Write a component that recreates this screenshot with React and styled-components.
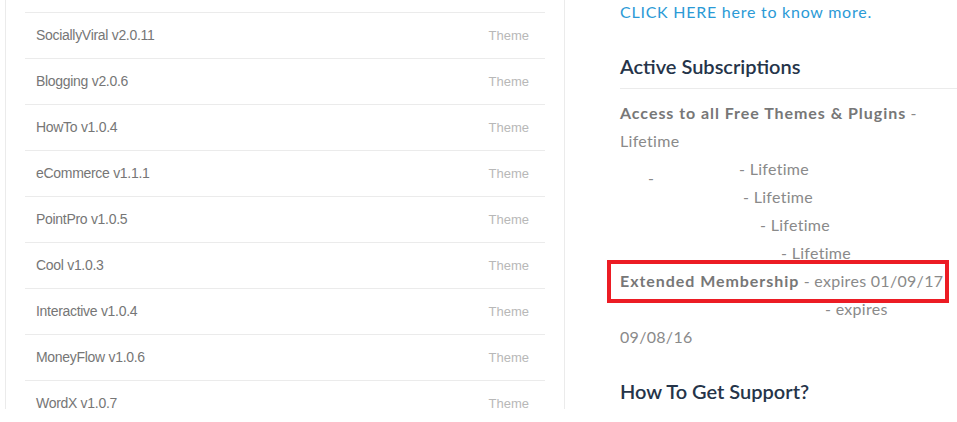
import React from "react";
import styled, { createGlobalStyle } from "styled-components";

const Global = createGlobalStyle`
  html, body { margin: 0; padding: 0; background: #fff; }
  body { font-family: "Lato", "Liberation Sans", sans-serif; }
`;

const Page = styled.div`
  display: flex;
  align-items: flex-start;
  gap: 55px;
  padding-left: 5px;
  height: 422px;
  overflow: hidden;
`;

const Panel = styled.div`
  box-sizing: border-box;
  width: 560px;
  height: 409px;
  flex: none;
  border-left: 1px solid #ebebeb;
  border-right: 1px solid #ebebeb;
  padding: 12px 19px 0;
  overflow: hidden;
`;

const Row = styled.div`
  box-sizing: border-box;
  height: 46px;
  border-top: 1px solid #ebebeb;
  display: flex;
  align-items: center;
  justify-content: space-between;
  padding: 0 16px 1px 11px;
  font-family: "Liberation Sans", Arial, sans-serif;
`;

const Name = styled.span`
  font-size: 14px;
  letter-spacing: -0.3px;
  color: #767676;
`;

const Type = styled.span`
  font-size: 13px;
  color: #b8b8b8;
`;

const Side = styled.div`
  flex: 1;
  min-width: 0;
  font-family: "Lato", sans-serif;
`;

const Intro = styled.p`
  margin: 0;
  font-size: 16px;
  line-height: 24px;
  letter-spacing: 0.75px;
  color: #2b9ad6;
  white-space: nowrap;
`;

const Heading = styled.h3`
  margin: ${(p) => p.$top}px 0 0;
  font-size: 20px;
  line-height: 24px;
  font-weight: 600;
  color: #253449;
  padding-bottom: ${(p) => (p.$rule ? 10 : 0)}px;
  border-bottom: ${(p) => (p.$rule ? "1px solid #ebebeb" : "none")};
  white-space: nowrap;
`;

const Subs = styled.div`
  margin-top: 10px;
  font-size: 16px;
  line-height: 28px;
  letter-spacing: 0.3px;
  color: #8a8a8a;
`;

const Line = styled.div`
  position: relative;
  height: 28px;
  padding-left: ${(p) => p.$indent || 0}px;
  white-space: nowrap;
`;

const Strong = styled.strong`
  font-weight: 700;
  letter-spacing: 0.95px;
  color: #777;
`;

const LowDash = styled.span`
  display: inline-block;
  transform: translateY(9px);
  margin-left: 28px;
  width: 91px;
`;

const Highlight = styled.span`
  position: absolute;
  left: -13px;
  right: 8px;
  top: -7px;
  bottom: -8px;
  border: 4px solid #ec1c24;
  pointer-events: none;
`;

const items = [
  "SociallyViral v2.0.11",
  "Blogging v2.0.6",
  "HowTo v1.0.4",
  "eCommerce v1.1.1",
  "PointPro v1.0.5",
  "Cool v1.0.3",
  "Interactive v1.0.4",
  "MoneyFlow v1.0.6",
  "WordX v1.0.7",
];

export default function App() {
  return (
    <>
      <Global />
      <Page>
        <Panel>
          {items.map((n) => (
            <Row key={n}>
              <Name>{n}</Name>
              <Type>Theme</Type>
            </Row>
          ))}
        </Panel>
        <Side>
          <Intro>CLICK HERE here to know more.</Intro>
          <Heading $top={30} $rule>Active Subscriptions</Heading>
          <Subs>
            <Line>
              <Strong>Access to all Free Themes &amp; Plugins</Strong> -
            </Line>
            <Line>Lifetime</Line>
            <Line>
              <LowDash>-</LowDash>- Lifetime
            </Line>
            <Line $indent={123}>- Lifetime</Line>
            <Line $indent={140}>- Lifetime</Line>
            <Line $indent={161}>- Lifetime</Line>
            <Line>
              <Strong>Extended Membership</Strong> - expires 01/09/17
              <Highlight />
            </Line>
            <Line $indent={205}>- expires</Line>
            <Line>09/08/16</Line>
          </Subs>
          <Heading $top={28}>How To Get Support?</Heading>
        </Side>
      </Page>
    </>
  );
}
